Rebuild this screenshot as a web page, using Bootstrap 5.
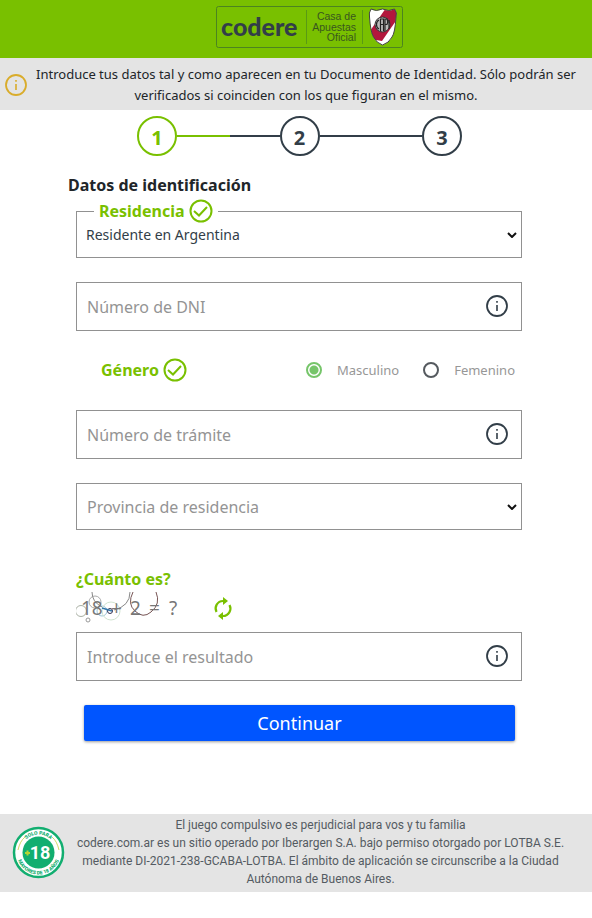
<!DOCTYPE html>
<html lang="es">
<head>
<meta charset="utf-8">
<meta name="viewport" content="width=device-width, initial-scale=1">
<title>Codere - Registro</title>
<link rel="stylesheet" href="https://cdn.jsdelivr.net/npm/bootstrap@5.3.0/dist/css/bootstrap.min.css">
<style>
  :root { --green: #79c000; --slate: #323e48; --line: #919191; --hint: #949494; }
  body { font-family: "Noto Sans", sans-serif; font-size: 14px; color: #212529; background: #fff; }
  .topbar { background: var(--green); height: 58px; padding: 6px 0 0 28px; }
  .notice { background: #e4e4e4; padding: 6px 8px 4px 4px; font-size: 13px; line-height: 21px; }
  .stepper { padding: 6px 130px 0 137px; }
  .step { width: 40px; height: 40px; border: 2px solid var(--slate); color: var(--slate); font-size: 20px; line-height: 40px; font-weight: 700; }
  .step.current { border-color: var(--green); color: var(--green); }
  .track { height: 2px; background: var(--slate); }
  .track.half { background: linear-gradient(90deg, var(--green) 51%, var(--slate) 51%); }
  .signup { padding: 0 70px 0 76px; }
  .section-title { font-size: 16px; line-height: 24px; font-weight: 700; margin: 17px 0 2px -8px; }
  .tag { color: var(--green); font-size: 16px; line-height: 24px; font-weight: 700; }
  .outlined { border: 1px solid var(--line); }
  .outlined legend { float: none; width: auto; margin: 0 0 0 17px; padding: 0 5px; }
  .form-select, .form-control { border-radius: 0; border: 1px solid var(--line); font-size: 16px; color: #323e48; }
  .form-select {
    --bs-form-select-bg-img: url("data:image/svg+xml,%3Csvg xmlns='http://www.w3.org/2000/svg' viewBox='0 0 10 6'%3E%3Cpath fill='none' stroke='%23111' stroke-width='2' d='M1 1l4 4 4-4'/%3E%3C/svg%3E");
    background-image: var(--bs-form-select-bg-img);
    background-size: 10px 6px; background-position: right 4px center; padding: 0 24px 0 10px;
  }
  .outlined .form-select { border: 0; height: 24px; font-size: 14px; line-height: 24px; margin-bottom: 10px; padding-left: 9px; }
  .province { height: 47px; color: var(--hint); }
  .form-control { height: 49px; padding: 0 48px 0 10px; }
  .form-control::placeholder { color: var(--hint); opacity: 1; }
  .hint-btn { right: 13px; top: 12px; line-height: 0; color: var(--slate); }
  .gender { height: 24px; margin: 27px 0 28px; padding: 0 7px 0 25px; }
  .gender .form-check-input { width: 16px; height: 16px; margin: 0; border: 2px solid #555a5f; background-image: none; }
  .gender .form-check-input:checked { background: #fff radial-gradient(circle, #76c56a 0 4px, #fff 5px); border-color: #76c56a; }
  .gender label { font-size: 13px; color: #979797; padding-left: 15px; line-height: 24px; }
  .quiz { margin-top: 37px; }
  .captcha { padding-top: 1px; }
  .btn-go { background: #05f; color: #fff; font-size: 18px; line-height: 36px; border-radius: 2px; margin: 24px 7px 0 8px; box-shadow: 0 1px 3px rgba(0,0,0,.4); }
  .btn-go:hover { background: #0047d6; color: #fff; }
  .legal { background: #e4e4e4; margin-top: 73px; padding: 2px 24px 4px 12px; font-family: Roboto, sans-serif; font-size: 12px; line-height: 18px; color: #545b62; }
</style>
<script src="https://cdn.jsdelivr.net/npm/bootstrap@5.3.0/dist/js/bootstrap.bundle.min.js"></script>
</head>
<body>
<svg class="d-none" aria-hidden="true">
  <symbol id="info" viewBox="0 0 24 24"><circle cx="12" cy="12" r="10" fill="none" stroke="currentColor" stroke-width="1.800"/><path fill="currentColor" d="M11.200 7h1.600v1.800h-1.600zM11.200 11h1.600v6h-1.600z"/></symbol>
  <symbol id="check" viewBox="0 0 24 24"><circle cx="12" cy="12" r="10.500" fill="none" stroke="currentColor" stroke-width="2"/><path d="M5 12l5 4.500 8-8.500" fill="none" stroke="currentColor" stroke-width="2"/></symbol>
</svg>

<header class="topbar text-center">
  <a href="#" class="d-inline-block lh-1" aria-label="Codere, Casa de Apuestas Oficial">
    <svg width="188" height="42" viewBox="0 0 188 42">
      <rect x=".5" y=".5" width="186" height="41" rx="2" fill="none" stroke="#4c8420"/>
      <text x="5" y="30" font-family="Lato, sans-serif" font-weight="900" font-size="25" fill="#323e48">codere</text>
      <path d="M90.500 4v34M146.500 4v34" stroke="#5a9a14"/>
      <g font-family="Liberation Sans, sans-serif" font-size="10.500" fill="#38561f" text-anchor="end">
        <text x="140" y="14">Casa de</text><text x="140" y="25">Apuestas</text><text x="140" y="35">Oficial</text>
      </g>
      <clipPath id="crest"><path d="M155 3q5 3 11.500 0 6.500 3 12 0 3 4 1.500 8-1 16-4 20-3 6-9.500 8-6-2-9-8-3-5-4-20-1-4 1.500-8z"/></clipPath>
      <g clip-path="url(#crest)"><path fill="#fff" d="M150 0h34v42h-34z"/><path fill="#b3173d" d="M170 2h14v7l-18 26-12-2v-8z"/></g>
      <path d="M155 3q5 3 11.500 0 6.500 3 12 0 3 4 1.500 8-1 16-4 20-3 6-9.500 8-6-2-9-8-3-5-4-20-1-4 1.500-8z" fill="none" stroke="#444"/>
      <circle cx="166.500" cy="18.500" r="7.500" fill="#bbb" stroke="#333"/>
      <path d="M163 14q-2.500 1-2.500 4.500t2.500 4.500M164.500 25V13h3v12M164.500 18.500h3M169 25V13h2q1.500 3 0 5.500h-2M173 23v-9" fill="none" stroke="#222" stroke-width="1.200"/>
    </svg>
  </a>
</header>

<div class="notice d-flex align-items-center" role="note">
  <svg class="flex-shrink-0" width="24" height="24" color="#d9ac2b"><use href="#info"/></svg>
  <p class="flex-grow-1 text-center mb-0">Introduce tus datos tal y como aparecen en tu Documento de Identidad. Sólo podrán ser verificados si coinciden con los que figuran en el mismo.</p>
</div>

<main>
  <div class="stepper d-flex align-items-center">
    <div class="step current rounded-circle text-center flex-shrink-0">1</div><div class="track half flex-fill"></div>
    <div class="step rounded-circle text-center flex-shrink-0">2</div><div class="track flex-fill"></div>
    <div class="step rounded-circle text-center flex-shrink-0">3</div>
  </div>

  <form class="signup">
    <h1 class="section-title">Datos de identificación</h1>
    <fieldset class="outlined">
      <legend class="tag"><span class="d-flex align-items-center gap-1"><label for="res">Residencia</label><svg width="24" height="24"><use href="#check"/></svg></span></legend>
      <select id="res" class="form-select"><option>Residente en Argentina</option></select>
    </fieldset>

    <div class="position-relative mt-4">
      <input class="form-control" aria-label="Número de DNI" placeholder="Número de DNI">
      <button type="button" class="hint-btn btn p-0 border-0 position-absolute" aria-label="Ayuda DNI"><svg width="24" height="24"><use href="#info"/></svg></button>
    </div>

    <div class="gender d-flex align-items-center" role="radiogroup" aria-labelledby="gen">
      <span id="gen" class="tag me-auto d-flex align-items-center gap-1">Género <svg width="24" height="24"><use href="#check"/></svg></span>
      <input class="form-check-input" type="radio" name="g" id="masc" checked><label for="masc">Masculino</label>
      <input class="form-check-input ms-4" type="radio" name="g" id="fem"><label for="fem">Femenino</label>
    </div>

    <div class="position-relative">
      <input class="form-control" aria-label="Número de trámite" placeholder="Número de trámite">
      <button type="button" class="hint-btn btn p-0 border-0 position-absolute" aria-label="Ayuda trámite"><svg width="24" height="24"><use href="#info"/></svg></button>
    </div>

    <select class="form-select province mt-4" aria-label="Provincia de residencia"><option>Provincia de residencia</option></select>

    <label class="quiz tag d-block" for="answer">¿Cuánto es?</label>
    <div class="captcha d-flex align-items-center mb-2">
      <svg width="112" height="32" role="img" aria-label="18 + 2 = ?">
        <g fill="none">
          <circle cx="5" cy="19" r="5.500" stroke="#a9b0a4"/><circle cx="19" cy="10" r="6" stroke="#aaa"/><circle cx="12" cy="28" r="2" stroke="#999"/>
          <circle cx="26" cy="19" r="5" stroke="#9fc7da"/><circle cx="35" cy="19" r="9" stroke="#d0e4d0"/><circle cx="34" cy="19" r="2.500" stroke="#335"/>
          <path d="M16 0q0 10 10 15M38 18q16-4 16-18" stroke="#888"/><path d="M26 16l10 3" stroke="#37a" stroke-width="1.500"/>
          <path d="M57 0q-6 12 2 19 8 8 16 1 10-8 5-20" stroke="#755"/>
        </g>
        <g font-family="Noto Sans, sans-serif" font-size="19" fill="#777"><text x="5" y="23">18</text><text x="35" y="23">+</text><text x="54" y="23">2</text><text x="73" y="23">=</text><text x="93" y="23">?</text></g>
      </svg>
      <button type="button" class="btn p-0 border-0 lh-1 ms-4" aria-label="Recargar">
        <svg width="22" height="24" viewBox="0 0 22 24" fill="none" stroke="#79c000" stroke-width="2.200"><path d="M12 5h-1a7.500 7.500 0 0 0-6.500 11M10 20h1a7.500 7.500 0 0 0 6.500-11"/><path fill="#79c000" stroke="none" d="M11 1l5 4-5 4zM11 16l-5 4 5 4z"/></svg>
      </button>
    </div>
    <div class="position-relative">
      <input id="answer" class="form-control" placeholder="Introduce el resultado">
      <button type="button" class="hint-btn btn p-0 border-0 position-absolute" aria-label="Ayuda resultado"><svg width="24" height="24"><use href="#info"/></svg></button>
    </div>
    <div class="d-grid"><button type="submit" class="btn btn-go border-0 py-0">Continuar</button></div>
  </form>
</main>

<footer class="legal d-flex align-items-center">
  <svg class="flex-shrink-0" width="53" height="53" viewBox="0 0 53 53" role="img" aria-label="Solo para mayores de 18 años">
    <circle cx="26.500" cy="26.500" r="24.500" fill="#fff" stroke="#12ae70" stroke-width="2.500"/>
    <circle cx="26.500" cy="26.500" r="16" fill="#12ae70"/>
    <path id="arcTop" d="M8.500 26.500a18 18 0 0 1 36 0" fill="none"/><path id="arcBot" d="M4.500 26.500a22 22 0 0 0 44 0" fill="none"/>
    <g font-family="Roboto, sans-serif" font-weight="900" font-size="5" fill="#12ae70" text-anchor="middle">
      <text><textPath href="#arcTop" startOffset="50%">SOLO PARA</textPath></text><text><textPath href="#arcBot" startOffset="50%">MAYORES DE 18 AÑOS</textPath></text>
    </g>
    <path d="M6 24q2-9 7-13M47 24q-2-9-7-13" fill="none" stroke="#c5cf3a" stroke-width=".8"/>
    <path d="M13 27h5M15.500 24.500v5" stroke="#b5d334" stroke-width="2"/>
    <text x="28" y="33" text-anchor="middle" font-family="Roboto, sans-serif" font-weight="700" font-size="18" fill="#fff">18</text>
  </svg>
  <p class="flex-grow-1 text-center mb-0 ps-2">El juego compulsivo es perjudicial para vos y tu familia<br>codere.com.ar es un sitio operado por Iberargen S.A. bajo permiso otorgado por LOTBA S.E. mediante DI-2021-238-GCABA-LOTBA. El ámbito de aplicación se circunscribe a la Ciudad Autónoma de Buenos Aires.</p>
</footer>
</body>
</html>
